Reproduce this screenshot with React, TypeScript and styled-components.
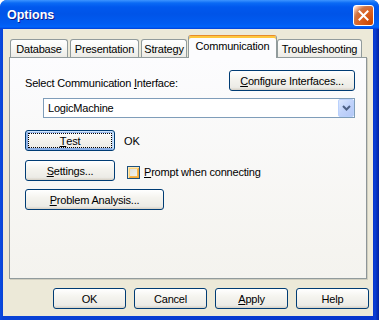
import styled, { createGlobalStyle } from 'styled-components';

const GlobalStyle = createGlobalStyle`
  html, body {
    margin: 0;
    padding: 0;
    background: #ffffff;
  }
  body {
    font-family: "Liberation Sans", Arial, sans-serif;
    font-size: 11px;
    color: #000000;
  }
`;

const tabs = [
  { label: 'Database', width: 58 },
  { label: 'Presentation', width: 69 },
  { label: 'Strategy', width: 46 },
  { label: 'Communication', width: 89, active: true },
  { label: 'Troubleshooting', width: 85 },
];

const CloseIcon = () => (
  <svg width="11" height="11" viewBox="0 0 11 11">
    <path d="M1.5 1.5 L9.5 9.5 M9.5 1.5 L1.5 9.5" stroke="#ffffff" strokeWidth="2" strokeLinecap="square" fill="none" />
  </svg>
);

const ChevronDown = () => (
  <svg width="9" height="6" viewBox="0 0 9 6">
    <path d="M1 1 L4.5 4.5 L8 1" stroke="#4D6185" strokeWidth="2" fill="none" />
  </svg>
);

export default function App() {
  return (
    <>
      <GlobalStyle />
      <S.Window>
        <S.TitleBar>
          <S.Title>Options</S.Title>
          <S.CloseButton>
            <CloseIcon />
          </S.CloseButton>
        </S.TitleBar>
        <S.Client>
          <S.TabStrip>
            {tabs.map((t) => (
              <S.Tab key={t.label} $width={t.width} $active={!!t.active}>
                {t.label}
              </S.Tab>
            ))}
          </S.TabStrip>
          <S.Panel>
            <S.HeaderRow>
              <S.FieldLabel>
                Select Communication <S.U>I</S.U>nterface:
              </S.FieldLabel>
              <S.Button $width={126}>
                <S.U>C</S.U>onfigure Interfaces...
              </S.Button>
            </S.HeaderRow>
            <S.Combo>
              <S.ComboText>LogicMachine</S.ComboText>
              <S.ComboArrow>
                <ChevronDown />
              </S.ComboArrow>
            </S.Combo>
            <S.Row $top={12}>
              <S.Button $width={90} $focused>
                <S.U>T</S.U>est
              </S.Button>
              <S.Status>OK</S.Status>
            </S.Row>
            <S.Row $top={9}>
              <S.Button $width={90}>
                <S.U>S</S.U>ettings...
              </S.Button>
              <S.CheckWrap>
                <S.CheckBox />
                <S.CheckLabel>
                  <S.U>P</S.U>rompt when connecting
                </S.CheckLabel>
              </S.CheckWrap>
            </S.Row>
            <S.Row $top={8}>
              <S.Button $width={139}>
                <S.U>P</S.U>roblem Analysis...
              </S.Button>
            </S.Row>
          </S.Panel>
          <S.Footer>
            <S.Button $width={73}>OK</S.Button>
            <S.Button $width={73}>Cancel</S.Button>
            <S.Button $width={73}>
              <S.U>A</S.U>pply
            </S.Button>
            <S.Button $width={73}>Help</S.Button>
          </S.Footer>
        </S.Client>
      </S.Window>
    </>
  );
}

namespace S {
  export const Window = styled.div`
    width: 379px;
    height: 320px;
    display: flex;
    flex-direction: column;
    border-radius: 7px 7px 0 0;
    overflow: hidden;
    background: linear-gradient(90deg, #0A4BDF 0, #0842D6 3px, #0735CC 373px, #0A3FD6 375px, #00209F 379px);
  `;

  export const TitleBar = styled.div`
    height: 29px;
    flex-shrink: 0;
    display: flex;
    justify-content: space-between;
    align-items: flex-start;
    padding: 0 5px 0 7px;
    box-sizing: border-box;
    background: linear-gradient(
      180deg,
      #3D95FF 0,
      #0A6AF5 3px,
      #0058EE 7px,
      #0054E8 14px,
      #005CF2 24px,
      #0064FB 27px,
      #003DD7 29px
    );
  `;

  export const Title = styled.div`
    margin-top: 8px;
    color: #ffffff;
    font-family: "Liberation Sans", Arial, sans-serif;
    font-weight: bold;
    font-size: 12.5px;
    line-height: 15px;
    text-shadow: 1px 1px #0F1D8C;
  `;

  export const CloseButton = styled.div`
    margin-top: 5px;
    width: 21px;
    height: 21px;
    box-sizing: border-box;
    border: 1px solid #ffffff;
    border-radius: 3px;
    display: flex;
    align-items: center;
    justify-content: center;
    background: radial-gradient(circle at 90% 90%, #CC4600 0%, #DC6527 55%, #CD7546 70%, #FFCCB2 90%, #ffffff 100%);
  `;

  export const Client = styled.div`
    flex: 1;
    margin: 0 6px 4px 3px;
    padding: 6px 6px 0 6px;
    background: #ECE9D8;
    display: flex;
    flex-direction: column;
  `;

  export const TabStrip = styled.div`
    height: 22px;
    display: flex;
    align-items: flex-end;
    padding-left: 1px;
    position: relative;
    z-index: 1;
  `;

  export const Tab = styled.div<{ $width: number; $active: boolean }>`
    width: ${(p) => p.$width}px;
    box-sizing: border-box;
    height: ${(p) => (p.$active ? 23 : 18)}px;
    margin-right: ${(p) => (p.$active ? 0 : 2)}px;
    margin-left: ${(p) => (p.$active ? -1 : 0)}px;
    margin-bottom: ${(p) => (p.$active ? -1 : 0)}px;
    border: 1px solid #919B9C;
    border-bottom: none;
    border-top-color: ${(p) => (p.$active ? '#E68B2C' : '#919B9C')};
    border-radius: 3px 3px 0 0;
    background: ${(p) =>
      p.$active ? '#FCFCFE' : 'linear-gradient(180deg, #FFFFFF 0%, #F7F7F4 50%, #ECEBE6 100%)'};
    box-shadow: ${(p) => (p.$active ? 'inset 0 2px #FFC73C' : 'none')};
    display: flex;
    justify-content: center;
    align-items: center;
    padding-top: ${(p) => (p.$active ? 0 : 1)}px;
    padding-bottom: ${(p) => (p.$active ? 3 : 0)}px;
    font-size: 11px;
    letter-spacing: -0.2px;
    white-space: nowrap;
  `;

  export const Panel = styled.div`
    height: 222px;
    box-sizing: border-box;
    border: 1px solid #919B9C;
    border-right-color: #8D9597;
    box-shadow: 1px 1px 0 #D0CEBF;
    background: linear-gradient(180deg, #FCFCFE 0%, #F4F3EE 100%);
    padding: 12px 11px 0 15px;
    display: flex;
    flex-direction: column;
  `;

  export const HeaderRow = styled.div`
    height: 21px;
    display: flex;
    justify-content: space-between;
    align-items: flex-end;
  `;

  export const FieldLabel = styled.div`
    line-height: 13px;
    padding-bottom: 1px;
    letter-spacing: -0.2px;
    white-space: nowrap;
  `;

  export const U = styled.span`
    text-decoration: underline;
  `;

  export const Button = styled.div<{ $width: number; $focused?: boolean }>`
    position: relative;
    width: ${(p) => p.$width}px;
    height: 21px;
    box-sizing: border-box;
    flex-shrink: 0;
    border: 1px solid #003C74;
    border-radius: 3px;
    background: linear-gradient(180deg, #FFFFFF 0%, #F5F4EF 40%, #ECEBE6 86%, #D6D0C5 100%);
    box-shadow: ${(p) =>
      p.$focused
        ? 'inset -1px 1px #CEE7FF, inset 1px 2px #98B8EA, inset -2px 2px #BCD4F6, inset 1px -1px #89ADE4, inset 2px -2px #89ADE4'
        : 'none'};
    display: flex;
    align-items: center;
    justify-content: center;
    font-size: 11px;
    letter-spacing: -0.2px;
    white-space: nowrap;

    &::after {
      content: '';
      display: ${(p) => (p.$focused ? 'block' : 'none')};
      position: absolute;
      inset: 2px;
      border: 1px dotted #000000;
    }
  `;

  export const Combo = styled.div`
    margin: 7px 0 0 18px;
    width: 312px;
    height: 20px;
    box-sizing: border-box;
    border: 1px solid #7F9DB9;
    background: #ffffff;
    display: flex;
    align-items: center;
  `;

  export const ComboText = styled.div`
    flex: 1;
    padding-left: 4px;
    font-size: 11px;
    letter-spacing: -0.2px;
  `;

  export const ComboArrow = styled.div`
    width: 16px;
    height: 18px;
    box-sizing: border-box;
    border: 1px solid #BAD1FC;
    border-radius: 2px;
    background: linear-gradient(135deg, #DCE8FE 0%, #C1D3FB 50%, #B4C8F6 100%);
    display: flex;
    align-items: center;
    justify-content: center;
  `;

  export const Row = styled.div<{ $top: number }>`
    margin-top: ${(p) => p.$top}px;
    display: flex;
    align-items: center;
  `;

  export const Status = styled.div`
    margin-left: 9px;
    font-size: 11px;
  `;

  export const CheckWrap = styled.div`
    margin-left: 12px;
    margin-top: 3px;
    display: flex;
    align-items: center;
  `;

  export const CheckBox = styled.div`
    width: 13px;
    height: 13px;
    box-sizing: border-box;
    border: 1px solid #1C5180;
    background: linear-gradient(135deg, #DCDCD7 0%, #EDEDE8 60%, #F5F5F2 100%);
    box-shadow: inset 1px 1px #FFE9B6, inset -1px -1px #F5A93A, inset 2px 2px #FCD57E, inset -2px -2px #F8B84E;
  `;

  export const CheckLabel = styled.div`
    margin-left: 4px;
    font-size: 11px;
    letter-spacing: -0.2px;
    white-space: nowrap;
  `;

  export const Footer = styled.div`
    margin-top: 9px;
    margin-right: -2px;
    display: flex;
    justify-content: flex-end;
    gap: 8px;
  `;
}
